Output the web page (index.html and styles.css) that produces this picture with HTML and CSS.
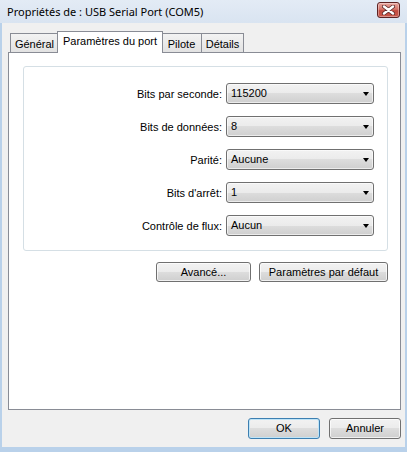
FILE: index.html
```html
<!DOCTYPE html>
<html lang="fr">
	<head>
		<meta http-equiv="Content-Type" content="text/html; charset=utf-8" />
		<title>Propriétés de : USB Serial Port (COM5)</title>
		<link rel="stylesheet" href="styles.css">
	</head>

	<body>
		<div class="window">
			<div class="titlebar">
				<span class="title">Propriétés de : USB Serial Port (COM5)</span>
				<div class="close">
					<svg width="13" height="10" viewBox="0 0 13 10">
						<path d="M2 1.5 L11 8.5 M11 1.5 L2 8.5" stroke="#5a2a2a" stroke-width="4" stroke-linecap="round"/>
						<path d="M2 1.5 L11 8.5 M11 1.5 L2 8.5" stroke="#ffffff" stroke-width="2.4" stroke-linecap="round"/>
					</svg>
				</div>
			</div>

			<div class="client">
				<div class="tabs">
					<div class="tab tab-general">Général</div>
					<div class="tab tab-port active">Paramètres du port</div>
					<div class="tab tab-pilote">Pilote</div>
					<div class="tab tab-details">Détails</div>
				</div>

				<div class="panel">
					<div class="group">
						<label class="lbl">Bits par seconde:</label>
						<div class="combo">115200<i class="arrow"></i></div>

						<label class="lbl">Bits de données:</label>
						<div class="combo">8<i class="arrow"></i></div>

						<label class="lbl">Parité:</label>
						<div class="combo">Aucune<i class="arrow"></i></div>

						<label class="lbl">Bits d'arrêt:</label>
						<div class="combo">1<i class="arrow"></i></div>

						<label class="lbl">Contrôle de flux:</label>
						<div class="combo">Aucun<i class="arrow"></i></div>
					</div>

					<div class="actions">
						<div class="btn btn-avance">Avancé...</div>
						<div class="btn btn-defaut">Paramètres par défaut</div>
					</div>
				</div>

				<div class="footer">
					<div class="btn btn-foot default">OK</div>
					<div class="btn btn-foot">Annuler</div>
				</div>
			</div>
		</div>
	</body>
</html>
```

FILE: styles.css
```css
body{
	margin:0;
	padding:0;
	background:#b9d1ea;
}
.window {
	width: 407px;
	height: 452px;
	box-sizing: border-box;
	padding: 0 2px 5px 2px;
	background: #b9d1ea;
	display: flex;
	flex-direction: column;
	font-family: "Liberation Sans", Arial, sans-serif;
	font-size: 11px;
	color: #000;
}
.titlebar {
	height: 23px;
	margin: 0 -2px;
	padding: 0 7px 0 7px;
	display: flex;
	align-items: flex-start;
	justify-content: space-between;
	background: linear-gradient(#e3ebf5, #d9e4f1);
}
.title {
	font-family: "Noto Sans", "Open Sans", sans-serif;
	font-size: 11px;
	line-height: 24px;
	color: #000;
}
.close {
	width: 23px;
	height: 16px;
	margin-top: 2px;
	box-sizing: border-box;
	border: 1px solid #5e2323;
	border-radius: 3px;
	background: linear-gradient(#e8a69f 0%, #d47469 45%, #c24a3e 55%, #c9584b 100%);
	box-shadow: inset 0 0 0 1px rgba(255,255,255,.35);
	display: flex;
	align-items: center;
	justify-content: center;
}
.client {
	flex: 1;
	background: #f0f0f0;
	padding: 8px 4px 0 6px;
	display: flex;
	flex-direction: column;
}
.tabs {
	display: flex;
	align-items: flex-end;
	margin-left: 2px;
	margin-bottom: -1px;
	position: relative;
	z-index: 1;
}
.tab {
	height: 18px;
	margin-bottom: 1px;
	box-sizing: content-box;
	border: 1px solid #898c95;
	border-bottom: none;
	background: linear-gradient(#f3f3f3, #e2e2e2);
	text-align: center;
	line-height: 20px;
	white-space: nowrap;
}
.tab.active {
	height: 21px;
	margin-bottom: 0;
	background: #fff;
	line-height: 18px;
	position: relative;
	z-index: 2;
}
.tab-general { width: 47px; }
.tab-port { width: 104px; margin: 0 -2px; }
.tab-pilote { width: 39px; }
.tab-details { width: 41px; margin-left: -1px; }

.panel {
	height: 356px;
	border: 1px solid #898c95;
	background: #fff;
}
.group {
	width: 336px;
	margin: 13px 0 0 14px;
	padding: 16px 13px 14px 14px;
	border: 1px solid #d5dfe5;
	border-radius: 3px;
	display: grid;
	grid-template-columns: 1fr 148px;
	grid-auto-rows: 21px;
	column-gap: 4px;
	row-gap: 12px;
	align-items: center;
}
.lbl {
	text-align: right;
	white-space: nowrap;
}
.combo {
	height: 21px;
	box-sizing: border-box;
	border: 1px solid #707070;
	border-radius: 3px;
	background: linear-gradient(#f2f2f2 0%, #ebebeb 50%, #dddddd 50%, #cfcfcf 100%);
	box-shadow: inset 0 0 0 1px rgba(255,255,255,.6);
	padding-left: 4px;
	line-height: 19px;
	display: flex;
	justify-content: space-between;
	align-items: center;
	padding-right: 4px;
}
.arrow {
	width: 0;
	height: 0;
	border-left: 3.5px solid transparent;
	border-right: 3.5px solid transparent;
	border-top: 4px solid #000;
}
.actions {
	width: 365px;
	margin: 11px 0 0 14px;
	display: flex;
	justify-content: flex-end;
	gap: 8px;
}
.btn {
	height: 20px;
	box-sizing: border-box;
	border: 1px solid #707070;
	border-radius: 3px;
	background: linear-gradient(#f2f2f2 0%, #ebebeb 50%, #dddddd 50%, #cfcfcf 100%);
	box-shadow: inset 0 0 0 1px rgba(255,255,255,.7);
	text-align: center;
	line-height: 18px;
	white-space: nowrap;
}
.btn-avance { width: 95px; }
.btn-defaut { width: 129px; }

.footer {
	display: flex;
	justify-content: flex-end;
	gap: 9px;
	padding-top: 8px;
}
.btn-foot {
	width: 72px;
	height: 21px;
	line-height: 19px;
}
.btn.default {
	border-color: #3c7fb1;
	box-shadow: inset 0 0 0 1px #bfe4f7;
}
```
